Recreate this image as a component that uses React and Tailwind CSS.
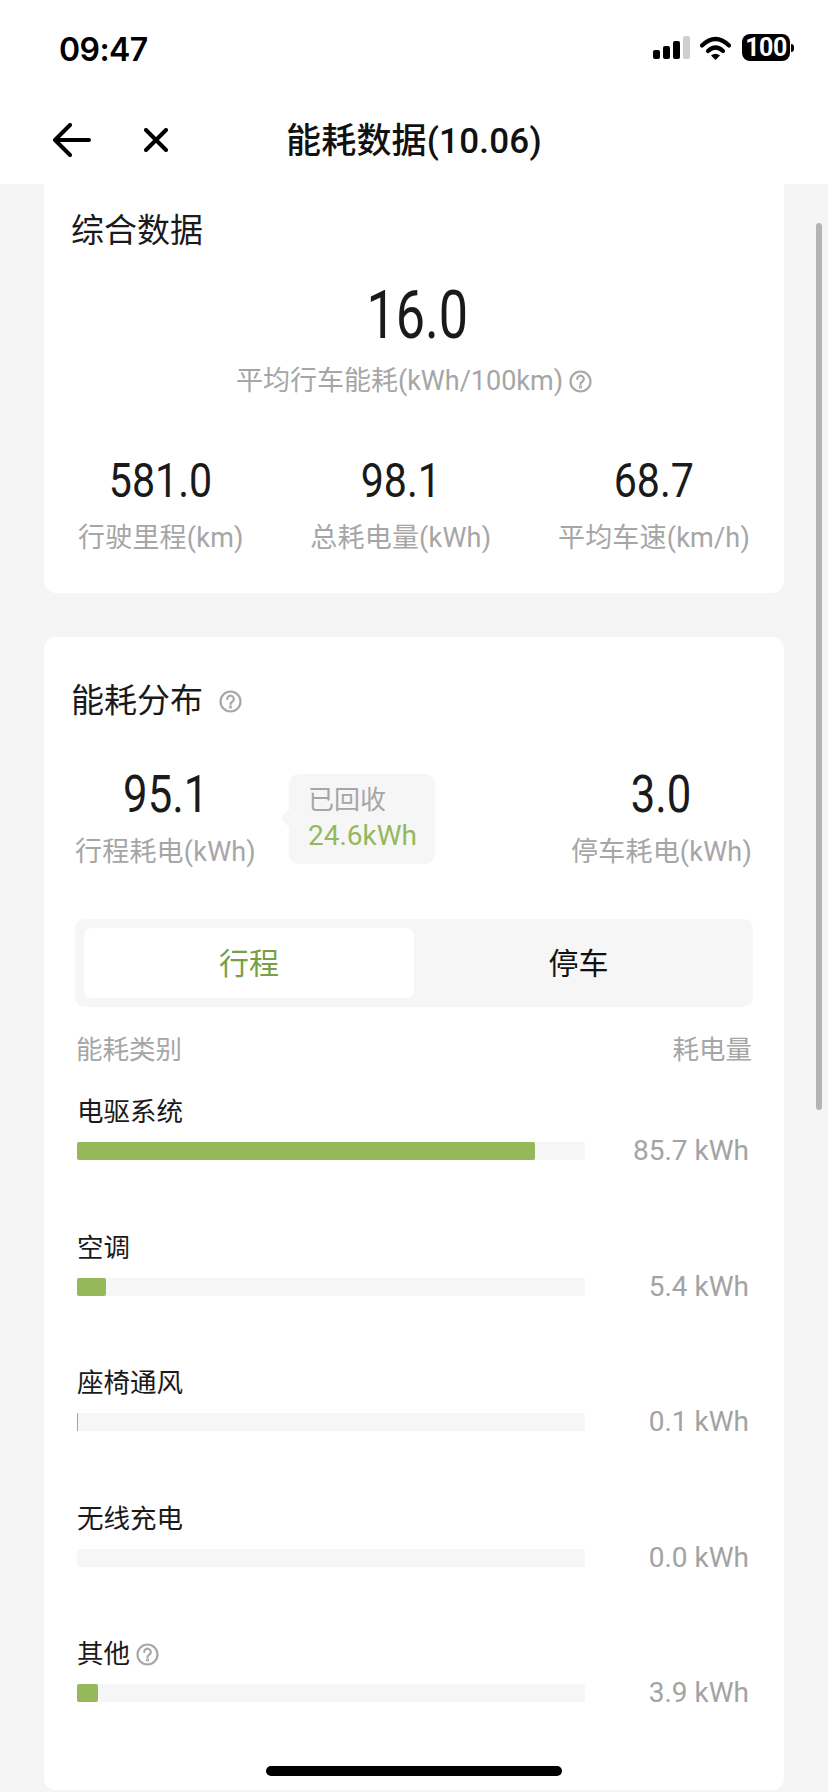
import React from 'react';

const FONT = "font-['Roboto','Noto_Sans_CJK_SC',sans-serif]";

const ROWS = [
  { name: '电驱系统', value: '85.7 kWh', fill: 'w-[458px]' },
  { name: '空调', value: '5.4 kWh', fill: 'w-[29px]' },
  { name: '座椅通风', value: '0.1 kWh', fill: 'w-px' },
  { name: '无线充电', value: '0.0 kWh', fill: 'w-0' },
  { name: '其他', value: '3.9 kWh', fill: 'w-[21px]', help: true },
];

export default function App() {
  return (
    <div className={`relative h-[1792px] w-[828px] overflow-hidden bg-[#f5f5f5] ${FONT}`}>
      {/* Status bar + nav */}
      <header className="h-[184px] bg-white">
        <div className="flex h-[100px] items-start pl-[59px] pr-[34px] pt-[31px]">
          <span className="text-[32px] font-semibold leading-[37px] tracking-[-0.6px] text-black font-['Inter',sans-serif]">09:47</span>
          <div className="ml-auto flex items-center pt-[3px]">
            <SignalIcon />
            <WifiIcon />
            <Battery />
          </div>
        </div>
        <div className="flex h-[84px] items-start pl-[53px] pt-[23px]">
          <BackIcon />
          <CloseIcon />
          <h1 className="ml-[118px] mt-[2px] text-[35px] font-medium leading-[34px] tracking-[0.2px] text-[#111]">能耗数据(10.06)</h1>
        </div>
      </header>

      <main className="flex flex-col gap-[44px] px-[44px]">
        {/* Summary card */}
        <section className="h-[409px] rounded-b-[12px] bg-white">
          <h2 className="pl-[27px] pt-[30px] text-[33px] leading-[34px] text-[#1a1a1a]">综合数据</h2>
          <div className="mt-[38px] flex flex-col items-center">
            <div className="ml-[6px] scale-x-[0.79] text-[66px] leading-[60px] text-[#1a1a1a]">16.0</div>
            <div className="mt-[17px] flex items-center gap-[6px] text-[27px] leading-[36px] text-[#a6a6a6]">
              平均行车能耗(kWh/100km)
              <HelpIcon />
            </div>
          </div>
          <div className="mt-[60px] flex justify-between pl-[34px] pr-[34px]">
            <Stat value="581.0" label="行驶里程(km)" size="text-[49px]" />
            <Stat value="98.1" label="总耗电量(kWh)" size="text-[49px]" />
            <Stat value="68.7" label="平均车速(km/h)" size="text-[49px]" />
          </div>
        </section>

        {/* Distribution card */}
        <section className="h-[1153px] rounded-[12px] bg-white">
          <div className="flex items-center gap-[16px] pl-[27px] pt-[46px]">
            <h2 className="text-[33px] leading-[36px] text-[#1a1a1a]">能耗分布</h2>
            <HelpIcon />
          </div>
          <div className="mt-[54px] flex pl-[31px] pr-[32px]">
            <Stat value="95.1" label="行程耗电(kWh)" size="text-[52px]" />
            <div className="relative ml-[33px] mt-[1px] h-[90px] w-[146px] rounded-[10px] bg-[#f6f6f6] pl-[19px] pt-[9px]">
              <div className="absolute left-[-6px] top-[38px] size-[13px] rotate-45 rounded-[2px] bg-[#f6f6f6]" />
              <div className="relative text-[26px] leading-[34px] text-[#a6a6a6]">已回收</div>
              <div className="relative mt-[2px] text-[28px] leading-[34px] text-[#95b85f]">24.6kWh</div>
            </div>
            <div className="ml-auto">
              <Stat value="3.0" label="停车耗电(kWh)" size="text-[52px]" />
            </div>
          </div>

          {/* Tabs */}
          <div className="ml-[31px] mt-[49px] flex h-[88px] w-[678px] items-center rounded-[10px] bg-[#f6f6f6] pl-[9px]">
            <div className="flex h-[70px] w-[330px] items-center justify-center rounded-[8px] bg-white text-[30px] text-[#77a046]">行程</div>
            <div className="flex h-[70px] w-[329px] items-center justify-center text-[30px] text-[#111]">停车</div>
          </div>

          <div className="mt-[25px] flex justify-between pl-[32px] pr-[32px] text-[26.5px] leading-[36px] text-[#a6a6a6]">
            <span>能耗类别</span>
            <span>耗电量</span>
          </div>

          {/* Category rows */}
          <div className="mt-[27px] flex flex-col pl-[33px] pr-[35px]">
            {ROWS.map((row) => (
              <div key={row.name} className="h-[135.5px]">
                <div className="flex h-[34px] items-center gap-[6px] text-[26.5px] leading-[34px] text-[#1a1a1a]">
                  {row.name}
                  {row.help && <HelpIcon />}
                </div>
                <div className="mt-[13px] flex h-[18px] items-center justify-between">
                  <div className="h-[18px] w-[508px] rounded-[2px] bg-[#f6f6f6]">
                    <div className={`h-full rounded-[2px] bg-[#95b85a] ${row.fill}`} />
                  </div>
                  <span className="text-[28px] leading-[34px] text-[#a3a3a3]">{row.value}</span>
                </div>
              </div>
            ))}
          </div>
        </section>
      </main>

      {/* Scroll thumb */}
      <div className="absolute left-[816px] top-[223px] h-[887px] w-[6px] rounded-full bg-[#b4b4b4]" />
      {/* Home indicator */}
      <div className="absolute left-[266px] top-[1766px] h-[10px] w-[296px] rounded-full bg-black" />
    </div>
  );
}

function Stat({ value, label, size }) {
  return (
    <div className="flex flex-col items-center">
      <div className={`scale-x-[0.84] leading-[44px] text-[#1a1a1a] ${size}`}>{value}</div>
      <div className="mt-[17px] text-[27px] leading-[36px] tracking-[0.2px] text-[#a6a6a6]">{label}</div>
    </div>
  );
}

function HelpIcon() {
  return (
    <svg width="23" height="23" viewBox="0 0 23 23" fill="none" stroke="#a8a8a8" strokeWidth="2.2" strokeLinecap="round">
      <circle cx="11.5" cy="11.5" r="10" />
      <path d="M8.2 9a3.3 3.3 0 1 1 5 2.8c-1 .6-1.7 1.2-1.7 2.4" />
      <circle cx="11.5" cy="17" r="0.6" />
    </svg>
  );
}

function BackIcon() {
  return (
    <svg width="38" height="34" viewBox="0 0 38 34" fill="none" stroke="#000" strokeWidth="4" strokeLinecap="round" strokeLinejoin="round">
      <path d="M36 17H3" />
      <path d="M17 2 2 17l15 15" />
    </svg>
  );
}

function CloseIcon() {
  return (
    <svg className="ml-[53px] mt-[5px]" width="24" height="24" viewBox="0 0 24 24" fill="none" stroke="#000" strokeWidth="4" strokeLinecap="round">
      <path d="M2 2l20 20M22 2 2 22" />
    </svg>
  );
}

function SignalIcon() {
  return (
    <div className="flex h-[23px] items-end gap-[3px]">
      <div className="h-[9px] w-[7px] rounded-[2px] bg-black" />
      <div className="h-[13px] w-[7px] rounded-[2px] bg-black" />
      <div className="h-[18px] w-[7px] rounded-[2px] bg-black" />
      <div className="h-[23px] w-[7px] rounded-[2px] bg-[#cfcfcf]" />
    </div>
  );
}

function WifiIcon() {
  return (
    <svg className="ml-[10px]" width="31" height="24" viewBox="0 0 31 24" fill="#000" stroke="none">
      <path d="M2 9.5Q15.5-3.5 29 9.5" fill="none" stroke="#000" strokeWidth="4.2" strokeLinecap="round" />
      <path d="M8 15Q15.5 8 23 15" fill="none" stroke="#000" strokeWidth="4.2" strokeLinecap="round" />
      <path d="M11 19.5Q15.5 16 20 19.5L15.5 24Z" />
    </svg>
  );
}

function Battery() {
  return (
    <div className="ml-[11px] flex items-center">
      <div className="flex h-[27px] w-[48px] items-center justify-center rounded-[8px] bg-black text-[25px] font-bold leading-none tracking-[-0.5px] text-white">100</div>
      <div className="ml-px h-[8px] w-[3px] rounded-r-full bg-black" />
    </div>
  );
}
